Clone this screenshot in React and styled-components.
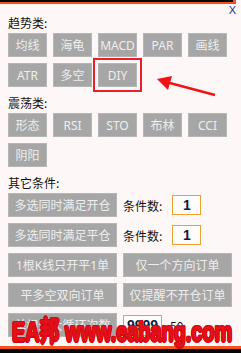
import React from "react";
import styled, { createGlobalStyle } from "styled-components";

const Global = createGlobalStyle`
  html, body { margin: 0; background: #fdf8f7; }
`;

const Frame = styled.div`
  position: relative;
  width: 241px;
  height: 353px;
  overflow: hidden;
  background: #fdf8f7;
  display: flex;
  flex-direction: column;
  font-family: "Noto Sans", "Noto Sans CJK SC", sans-serif;
`;

const TopBar = styled.div`
  width: 233px;
  height: 3px;
  background: #050505;
  border-bottom: 2px solid #f4511e;
  border-right: 3px solid #f4511e;
`;

const CloseRow = styled.div`
  height: 12px;
  display: flex;
  justify-content: flex-end;
  padding-right: 5px;
`;

const Close = styled.span`
  font-size: 11px;
  line-height: 12px;
  color: #1c2f80;
  font-family: "Liberation Sans", sans-serif;
`;

const Content = styled.div`
  padding: 0 8px;
  display: flex;
  flex-direction: column;
`;

const Label = styled.div`
  font-size: 12px;
  line-height: 14px;
  color: #111;
  margin-bottom: 3px;
  font-family: "Noto Sans CJK SC", sans-serif;
`;

const Grid = styled.div`
  display: grid;
  grid-template-columns: repeat(${(p) => p.cols}, ${(p) => p.w}px);
  gap: 6px;
  margin-bottom: 9px;
`;

const Btn = styled.div`
  height: 24px;
  box-sizing: border-box;
  background: #a6a6a6;
  border: 1px solid #b6b6b6;
  color: #eeeeee;
  font-size: 12px;
  display: flex;
  align-items: center;
  justify-content: center;
  white-space: nowrap;
  ${(p) => p.marked && "outline: 2px solid #e8202a; outline-offset: 3px;"}
`;

const Cond = styled.div`
  display: flex;
  align-items: center;
  gap: ${(p) => p.gap}px;
  font-size: 12px;
  color: #111;
  font-family: "Noto Sans CJK SC", sans-serif;
`;

const NumBox = styled.div`
  width: ${(p) => p.w}px;
  height: ${(p) => p.h}px;
  box-sizing: border-box;
  border: 1px solid #f0a030;
  background: #fffdfb;
  display: flex;
  align-items: center;
  justify-content: center;
  font: bold 14px "Liberation Sans", sans-serif;
  color: #0a1a40;
`;

const BottomBar = styled.div`
  margin-top: auto;
  height: 5px;
  background: #050505;
  border-top: 3px solid #f4511e;
`;

const Arrow = styled.svg`
  position: absolute;
  left: 0;
  top: 0;
  pointer-events: none;
`;

const Watermark = styled.div`
  position: absolute;
  left: 12px;
  top: 318px;
  font: bold 28px/28px "Liberation Sans", "Noto Sans CJK SC", sans-serif;
  color: #e5101a;
  white-space: nowrap;
  transform: scaleX(0.71);
  transform-origin: left center;
  -webkit-text-stroke: 2px #ffffff;
  paint-order: stroke fill;
  text-shadow: 1.5px 0 0 #d40a12, -1.5px 0 0 #d40a12, 0 1.5px 0 #d40a12,
    0 -1.5px 0 #d40a12, 1px 1px 0 #d40a12, -1px -1px 0 #d40a12,
    1px -1px 0 #d40a12, -1px 1px 0 #d40a12;
`;

const trend = ["均线", "海龟", "MACD", "PAR", "画线", "ATR", "多空", "DIY"];
const shock = ["形态", "RSI", "STO", "布林", "CCI", "阴阳"];

export default function App() {
  return (
    <Frame>
      <Global />
      <TopBar />
      <CloseRow>
        <Close>X</Close>
      </CloseRow>
      <Content>
        <Label>趋势类:</Label>
        <Grid cols={5} w={39}>
          {trend.map((t) => (
            <Btn key={t} marked={t === "DIY"}>
              {t}
            </Btn>
          ))}
        </Grid>
        <Label>震荡类:</Label>
        <Grid cols={5} w={39}>
          {shock.map((t) => (
            <Btn key={t}>{t}</Btn>
          ))}
        </Grid>
        <Label>其它条件:</Label>
        <Grid cols={2} w={109}>
          <Btn>多选同时满足开仓</Btn>
          <Cond gap={10}>
            条件数:
            <NumBox w={29} h={20}>1</NumBox>
          </Cond>
          <Btn>多选同时满足平仓</Btn>
          <Cond gap={10}>
            条件数:
            <NumBox w={29} h={20}>1</NumBox>
          </Cond>
          <Btn>1根K线只开平1单</Btn>
          <Btn>仅一个方向订单</Btn>
          <Btn>平多空双向订单</Btn>
          <Btn>仅提醒不开仓订单</Btn>
          <Btn>单根最大循环次数</Btn>
          <Cond gap={8}>
            <NumBox w={39} h={21}>9999</NumBox>
            50
          </Cond>
        </Grid>
      </Content>
      <BottomBar />
      <Arrow width="241" height="353">
        <line x1="215" y1="95" x2="166" y2="82" stroke="#f01414" strokeWidth="2.5" />
        <polygon points="157,79 172,76 168,90" fill="#f01414" />
      </Arrow>
      <Watermark>EA邦 www.eabang.com</Watermark>
    </Frame>
  );
}
